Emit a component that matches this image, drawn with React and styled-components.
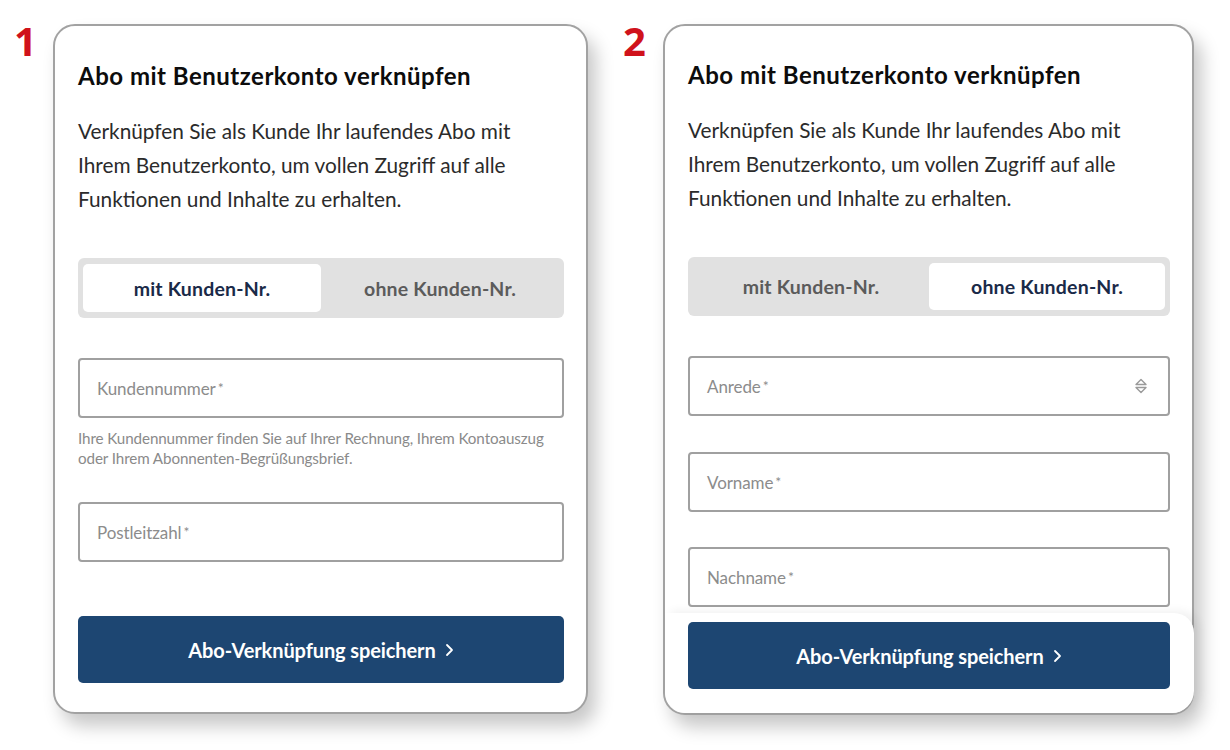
import React from "react";
import styled, { createGlobalStyle } from "styled-components";

const Global = createGlobalStyle`
  html, body { margin: 0; padding: 0; background: #ffffff; }
  body { font-family: Lato, "Noto Sans", sans-serif; -webkit-font-smoothing: antialiased; }
  * { box-sizing: border-box; }
`;

const Page = styled.div`
  display: flex;
  align-items: flex-start;
  padding: 24px 0 0 14px;
  gap: 35px;
  width: 1230px;
  height: 750px;
`;

const Group = styled.div`
  display: flex;
  align-items: flex-start;
  gap: ${(p) => p.$gap}px;
`;

const Number = styled.div`
  font-family: "Open Sans", Lato, sans-serif;
  font-weight: 700;
  font-size: 40px;
  line-height: 34px;
  color: #d0121b;
  width: 22px;
`;

const Card = styled.div`
  width: ${(p) => p.$w}px;
  height: ${(p) => p.$h}px;
  border: 2px solid #a2a2a2;
  border-radius: 22px;
  background: #fff;
  box-shadow: 8px 12px 18px rgba(0, 0, 0, 0.22);
  padding: ${(p) => p.$pt}px 22px 0 23px;
  display: flex;
  flex-direction: column;
`;

const Title = styled.h2`
  margin: 0;
  font-size: 24px;
  line-height: 28px;
  font-weight: 700;
  color: #0c0c0c;
  letter-spacing: 0.5px;
`;

const Intro = styled.p`
  margin: ${(p) => p.$mt}px 0 0;
  font-size: 20.8px;
  line-height: 34px;
  color: #2b2b2b;
`;

const Toggle = styled.div`
  margin-top: ${(p) => p.$mt}px;
  height: ${(p) => p.$h}px;
  background: #e1e1e1;
  border-radius: 6px;
  padding: 6px 5px;
  display: grid;
  grid-template-columns: 1fr 1fr;
`;

const ToggleItem = styled.div`
  display: flex;
  align-items: center;
  justify-content: center;
  border-radius: 5px;
  background: ${(p) => (p.$active ? "#ffffff" : "transparent")};
  color: ${(p) => (p.$active ? "#1a2a48" : "#5b5b5b")};
  font-weight: 700;
  font-size: 19.5px;
  letter-spacing: 0.2px;
`;

const Field = styled.div`
  margin-top: ${(p) => p.$mt}px;
  height: ${(p) => p.$h || 60}px;
  border: 2px solid #a0a0a0;
  border-radius: 4px;
  display: flex;
  align-items: center;
  justify-content: space-between;
  padding: 0 20px 0 17px;
`;

const Placeholder = styled.span`
  font-size: 17px;
  color: #8c8c8c;
  letter-spacing: -0.1px;
  sup {
    font-size: 14px;
    vertical-align: 2px;
    line-height: 0;
    margin-left: 2px;
  }
`;

const Help = styled.p`
  margin: 10px 0 0;
  font-size: 15.2px;
  line-height: 20px;
  color: #8a8a8a;
  letter-spacing: -0.1px;
`;

const Footer = styled.div`
  margin-top: ${(p) => p.$mt}px;
  ${(p) =>
    p.$sticky &&
    `
    margin-left: -23px;
    margin-right: -24px;
    padding: 9px 24px 0 23px;
    background: #fff;
    border-radius: 0 20px 22px 22px;
    box-shadow: 6px -2px 10px rgba(0,0,0,0.06);
    flex: 1;
  `}
`;

const Button = styled.button`
  width: 100%;
  height: 67px;
  border: none;
  border-radius: 5px;
  background: #1d4672;
  color: #fff;
  font-family: Lato, "Noto Sans", sans-serif;
  font-size: 20px;
  font-weight: 700;
  display: flex;
  align-items: center;
  justify-content: center;
  gap: 9px;
  letter-spacing: -0.1px;
`;

const Chevron = () => (
  <svg width="9" height="14" viewBox="0 0 9 14" fill="none">
    <path d="M2 2l5 5-5 5" stroke="#fff" strokeWidth="1.8" strokeLinecap="round" strokeLinejoin="round" />
  </svg>
);

const SelectIcon = () => (
  <svg width="14" height="20" viewBox="0 0 14 20" fill="none">
    <path d="M2 8.5L7 3.5l5 5z" stroke="#9a9a9a" strokeWidth="1.4" strokeLinejoin="round" />
    <path d="M2 11.5l5 5 5-5z" stroke="#9a9a9a" strokeWidth="1.4" strokeLinejoin="round" />
  </svg>
);

const IntroText = () => (
  <>
    Verknüpfen Sie als Kunde Ihr laufendes Abo mit
    <br />
    Ihrem Benutzerkonto, um vollen Zugriff auf alle
    <br />
    Funktionen und Inhalte zu erhalten.
  </>
);

export default function App() {
  return (
    <>
      <Global />
      <Page>
        <Group $gap={17}>
          <Number>1</Number>
          <Card $w={535} $h={690} $pt={36}>
            <Title>Abo mit Benutzerkonto verknüpfen</Title>
            <Intro $mt={24}>
              <IntroText />
            </Intro>
            <Toggle $mt={42} $h={60}>
              <ToggleItem $active>mit Kunden-Nr.</ToggleItem>
              <ToggleItem>ohne Kunden-Nr.</ToggleItem>
            </Toggle>
            <Field $mt={40}>
              <Placeholder>
                Kundennummer<sup>*</sup>
              </Placeholder>
            </Field>
            <Help>
              Ihre Kundennummer finden Sie auf Ihrer Rechnung, Ihrem Kontoauszug
              <br />
              oder Ihrem Abonnenten-Begrüßungsbrief.
            </Help>
            <Field $mt={34}>
              <Placeholder>
                Postleitzahl<sup>*</sup>
              </Placeholder>
            </Field>
            <Footer $mt={54}>
              <Button>
                Abo-Verknüpfung speichern <Chevron />
              </Button>
            </Footer>
          </Card>
        </Group>
        <Group $gap={18}>
          <Number>2</Number>
          <Card $w={531} $h={691} $pt={35}>
            <Title>Abo mit Benutzerkonto verknüpfen</Title>
            <Intro $mt={24}>
              <IntroText />
            </Intro>
            <Toggle $mt={42} $h={59}>
              <ToggleItem>mit Kunden-Nr.</ToggleItem>
              <ToggleItem $active>ohne Kunden-Nr.</ToggleItem>
            </Toggle>
            <Field $mt={40} $h={60}>
              <Placeholder>
                Anrede<sup>*</sup>
              </Placeholder>
              <SelectIcon />
            </Field>
            <Field $mt={36}>
              <Placeholder>
                Vorname<sup>*</sup>
              </Placeholder>
            </Field>
            <Field $mt={35}>
              <Placeholder>
                Nachname<sup>*</sup>
              </Placeholder>
            </Field>
            <Footer $mt={6} $sticky>
              <Button>
                Abo-Verknüpfung speichern <Chevron />
              </Button>
            </Footer>
          </Card>
        </Group>
      </Page>
    </>
  );
}
